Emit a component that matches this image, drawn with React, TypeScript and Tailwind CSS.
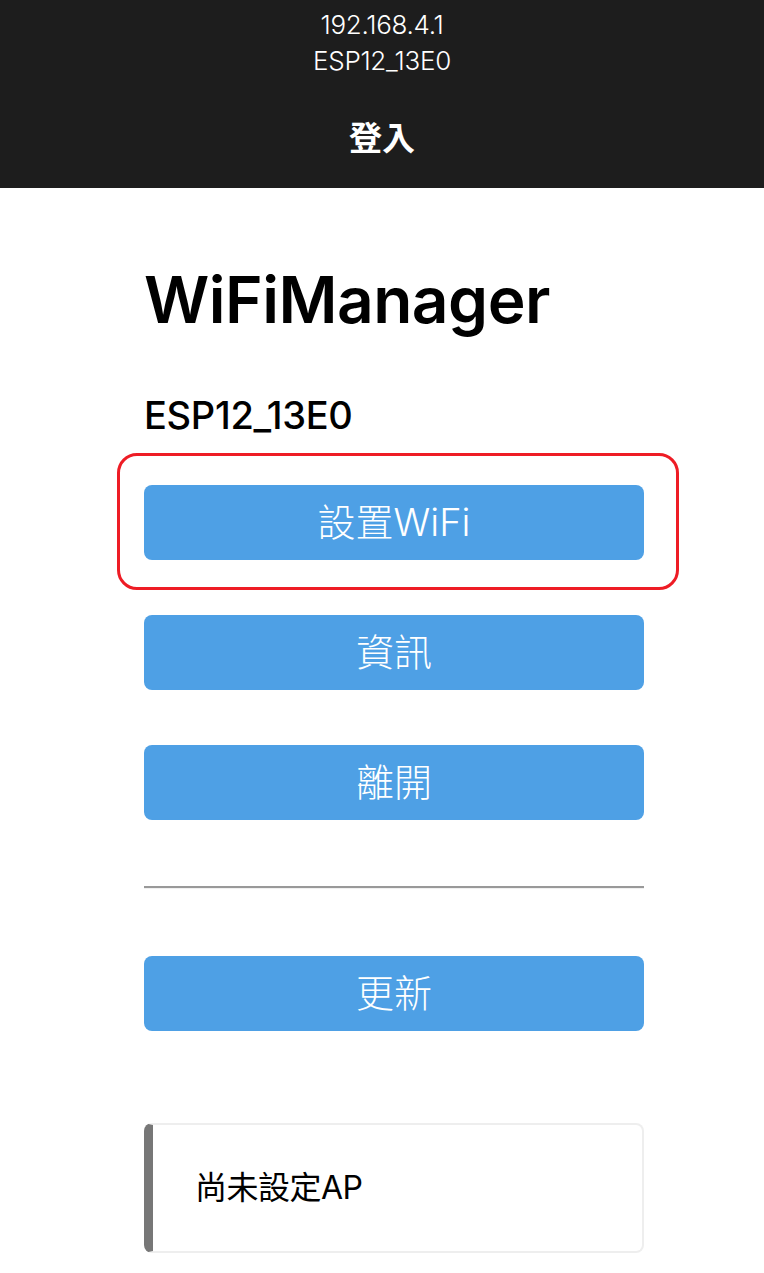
const sans = "font-['Inter','Noto_Sans_CJK_TC',sans-serif]";

const buttons = ["設置WiFi", "資訊", "離開"];

function MenuButton({ label }: { label: string }) {
  return (
    <button className="flex h-[75px] w-full items-center justify-center rounded-[8px] bg-[#4ea0e5] text-[38px] font-light text-white">
      {label}
    </button>
  );
}

export default function App() {
  return (
    <div className={`min-h-[1273px] bg-white ${sans}`}>
      <header className="flex h-[188px] flex-col items-center bg-[#1d1d1d] pt-[7px] text-white">
        <div className="text-[26px] font-light leading-[36px] tracking-[-0.3px]">192.168.4.1</div>
        <div className="text-[26px] font-light leading-[36px] tracking-[-0.3px]">ESP12_13E0</div>
        <div className="mt-[39px] text-[33px] font-bold leading-[40px]">登入</div>
      </header>

      <main className="w-[500px] ml-[144px] pt-[72px]">
        <h1 className="text-[64px] font-semibold leading-[80px] tracking-[-0.5px] text-black">WiFiManager</h1>
        <h3 className="mt-[53px] text-[38px] font-medium leading-[44px] tracking-[-0.3px] text-black">ESP12_13E0</h3>

        <div className="mt-[48px] flex flex-col gap-[55px]">
          {buttons.map((b, i) => (
            <div key={b} className="relative">
              {i === 0 && (
                <div className="pointer-events-none absolute -left-[27px] -right-[35px] -top-[32px] -bottom-[30px] rounded-[20px] border-[3px] border-[#ee1c25]" />
              )}
              <MenuButton label={b} />
            </div>
          ))}
        </div>

        <div className="mt-[66px] h-[3px] border-t-2 border-[#999] bg-[#f0f0f0]" />

        <div className="mt-[67px]">
          <MenuButton label="更新" />
        </div>

        <div className="mt-[92px] flex h-[130px] items-center rounded-[8px] border-2 border-l-[9px] border-[#eee] border-l-[#777] pl-[42px]">
          <span className="text-[32px] tracking-[-0.5px] text-black">尚未設定AP</span>
        </div>
      </main>
    </div>
  );
}
